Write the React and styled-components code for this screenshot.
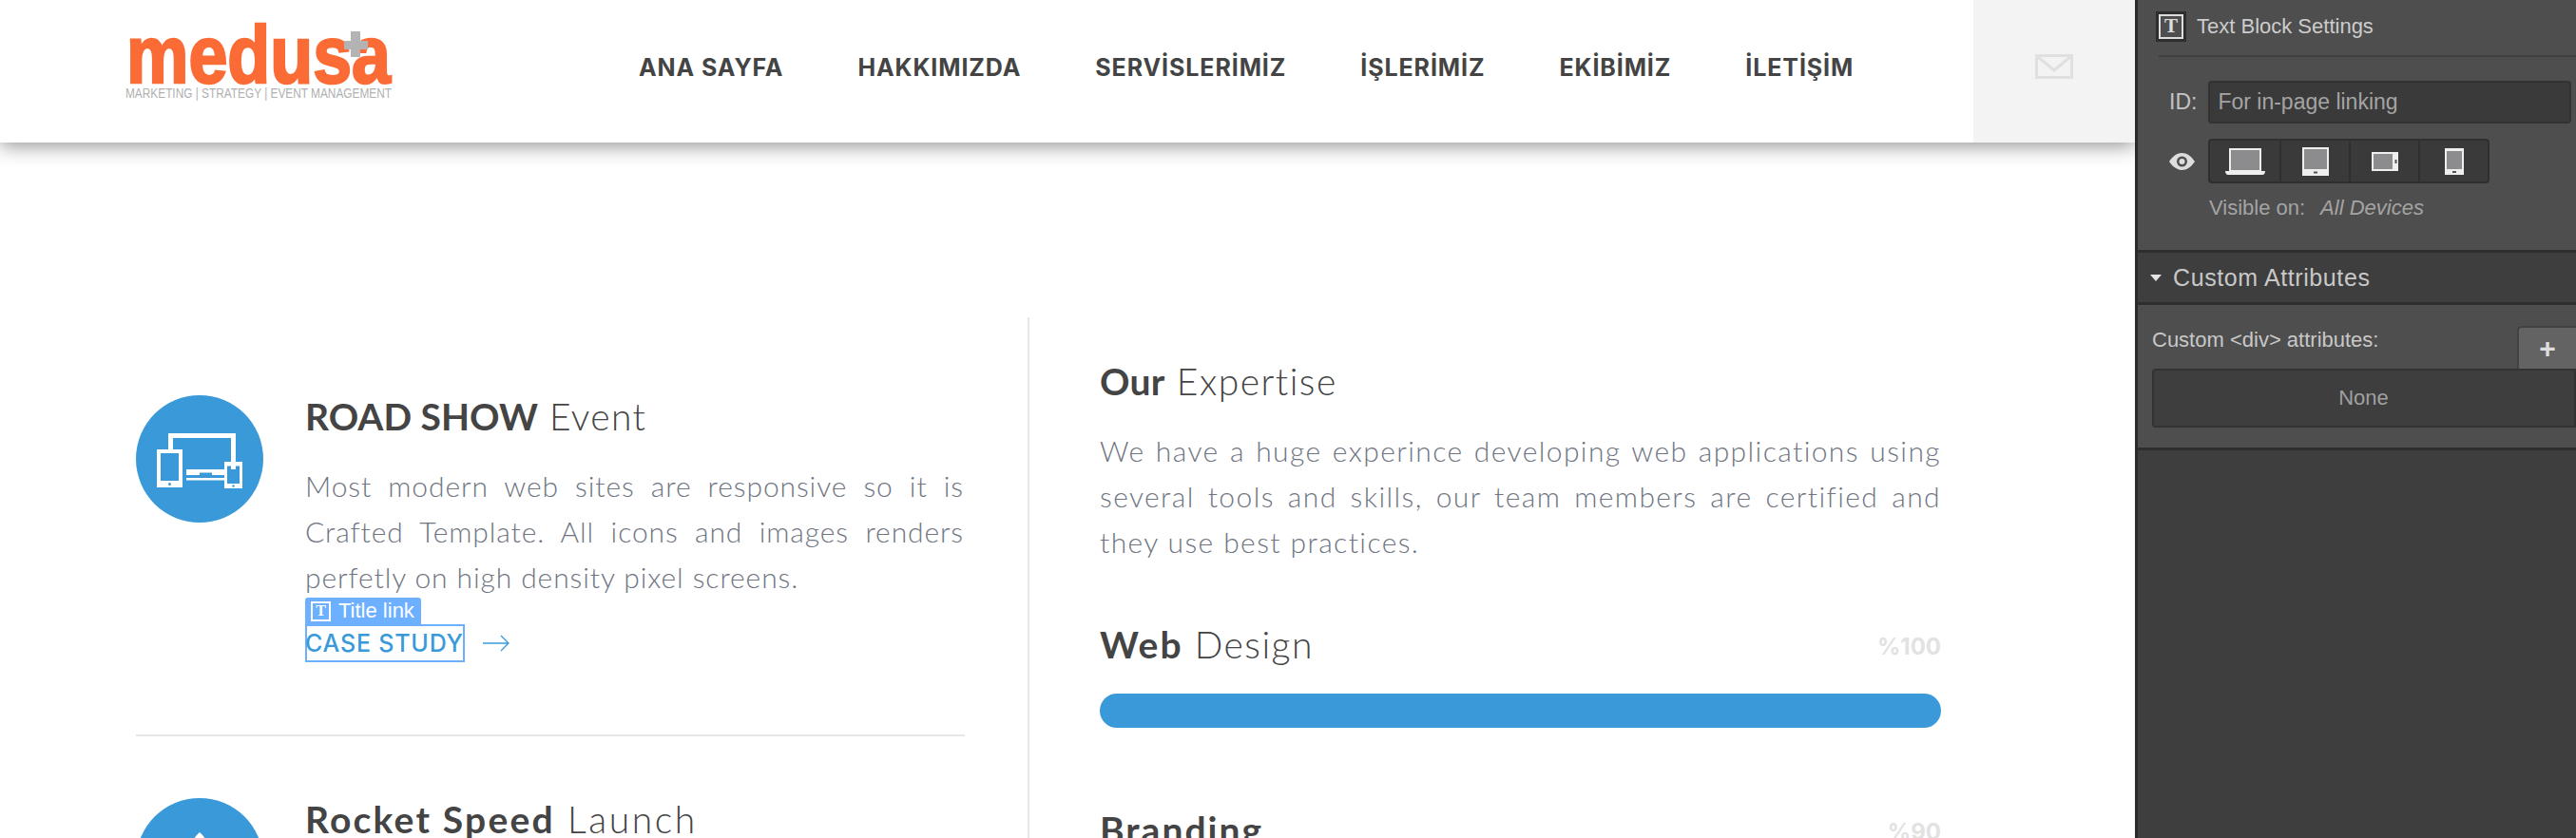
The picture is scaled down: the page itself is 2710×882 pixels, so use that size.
import React from 'react';
import styled, { createGlobalStyle } from 'styled-components';

const GlobalStyle = createGlobalStyle`
  html, body {
    margin: 0;
    padding: 0;
    height: 882px;
    overflow: hidden;
    background: #fff;
  }
  * { box-sizing: border-box; }
`;

const Page = styled.div`
  display: flex;
  width: 2710px;
  height: 882px;
  overflow: hidden;
  font-family: "Lato", "Liberation Sans", sans-serif;
`;

const Main = styled.main`
  width: 2246px;
  flex: none;
  height: 882px;
  overflow: hidden;
`;

const Header = styled.header`
  display: flex;
  height: 150px;
  background: #fff;
  box-shadow: 0 3px 20px rgba(0, 0, 0, 0.45);
  position: relative;
`;

const LogoWrap = styled.div`
  width: 280px;
  margin: 26px 0 0 132px;
  flex: none;
  svg { display: block; overflow: visible; }
`;

const Nav = styled.nav`
  display: flex;
  gap: 78px;
  margin-left: 260px;
  padding-top: 53px;
`;

const NavLink = styled.a`
  font-family: "Inter", "Liberation Sans", sans-serif;
  font-size: 25px;
  line-height: 36px;
  font-weight: 700;
  color: #444;
  letter-spacing: 0.9px;
  white-space: nowrap;
`;

const MailBox = styled.div`
  margin-left: auto;
  width: 170px;
  background: #f3f3f3;
  display: flex;
  justify-content: center;
  padding-top: 57px;
`;

const Columns = styled.div`
  display: flex;
  padding: 184px 0 0 143px;
`;

const LeftColumn = styled.section`
  width: 872px;
  padding-top: 82px;
  flex: none;
`;

const RightColumn = styled.section`
  margin-left: 66px;
  height: 548px;
  width: 961px;
  border-left: 2px solid #e6e6e6;
  padding: 16px 0 0 74px;
`;

const Feature = styled.article`
  display: flex;
  gap: 44px;
`;

const Circle = styled.div`
  width: 134px;
  height: 134px;
  border-radius: 50%;
  background: #3a9ad9;
  flex: none;
`;

const FeatureBody = styled.div`
  width: 693px;
`;

const Title = styled.h3`
  margin: ${p => p.$top || 0}px 0 0;
  font-size: 39px;
  line-height: 48px;
  font-weight: 300;
  color: #444;
  letter-spacing: ${p => p.$light || 0}px;
  white-space: nowrap;
  b {
    font-weight: 700;
    letter-spacing: ${p => p.$bold || 0}px;
  }
`;

const Text = styled.p`
  margin: ${p => p.$top || 0}px 0 0;
  width: ${p => p.$width || 'auto'};
  font-size: 30px;
  line-height: 48px;
  font-weight: 300;
  color: #6f7582;
  text-align: justify;
  letter-spacing: ${p => p.$ls || 0.9}px;
`;

const LinkRow = styled.div`
  display: flex;
  align-items: center;
  gap: 19px;
`;

const TitleTag = styled.div`
  display: flex;
  align-items: center;
  gap: 8px;
  width: 122px;
  height: 28px;
  margin-top: -2px;
  padding-left: 6px;
  background: #6cb0ff;
  border-radius: 3px 3px 0 0;
  color: #fff;
  font-family: "Liberation Sans", sans-serif;
  font-size: 22px;
  white-space: nowrap;
`;

const TIcon = styled.span`
  width: ${p => p.$size}px;
  height: ${p => p.$size}px;
  border: 2px solid ${p => p.$color};
  outline: ${p => (p.$dark ? '3px solid #2e2e2e' : 'none')};
  color: ${p => p.$color};
  display: flex;
  align-items: center;
  justify-content: center;
  font-family: "Liberation Serif", serif;
  font-weight: 700;
  font-size: ${p => p.$size - 5}px;
  line-height: 1;
  flex: none;
`;

const CaseLink = styled.a`
  display: block;
  width: 168px;
  height: 40px;
  border: 2px solid #6cb0ff;
  font-family: "Inter", "Liberation Sans", sans-serif;
  font-size: 25px;
  font-weight: 500;
  line-height: 37px;
  letter-spacing: 0.8px;
  color: #3a9ad9;
  white-space: nowrap;
  text-indent: -2px;
`;

const Rule = styled.hr`
  border: 0;
  height: 2px;
  background: #e6e6e6;
  margin: 76px 0 65px;
`;

const SkillRow = styled.div`
  display: flex;
  justify-content: space-between;
  margin-top: ${p => p.$top}px;
  width: 885px;
`;

const Percent = styled.span`
  font-family: "Inter", "Liberation Sans", sans-serif;
  font-size: 24px;
  font-weight: 700;
  line-height: 53px;
  color: #e2e2e2;
`;

const Bar = styled.div`
  width: 885px;
  height: 36px;
  margin-top: 23px;
  border-radius: 18px;
  background: #3a9ad9;
`;

const Panel = styled.aside`
  width: 464px;
  flex: none;
  height: 882px;
  background: #3e3e3e;
  border-left: 3px solid #2b2b2b;
  color: #ccc;
  font-family: "Liberation Sans", sans-serif;
  overflow: hidden;
`;

const PanelTop = styled.div`
  height: 263px;
  background: #4e4e4e;
`;

const PanelHead = styled.div`
  display: flex;
  align-items: center;
  gap: 14px;
  height: 60px;
  margin-left: 22px;
  padding: 0 0 3px;
  border-bottom: 2px solid #404040;
  font-size: 22px;
`;

const IdRow = styled.div`
  display: flex;
  align-items: center;
  gap: 12px;
  margin: 25px 0 0 33px;
  font-size: 23px;
  color: #c4c4c4;
`;

const IdInput = styled.div`
  width: 382px;
  height: 45px;
  padding: 0 8px;
  background: #3a3a3a;
  border: 2px solid #323232;
  border-radius: 4px;
  color: #a4a4a4;
  line-height: 41px;
`;

const DeviceRow = styled.div`
  display: flex;
  align-items: center;
  gap: 14px;
  margin: 16px 0 0 33px;
`;

const DeviceGroup = styled.div`
  display: flex;
  height: 47px;
  background: #3a3a3a;
  border: 2px solid #2f2f2f;
  border-radius: 4px;
`;

const DeviceCell = styled.div`
  width: 73px;
  display: flex;
  align-items: center;
  justify-content: center;
  border-left: ${p => (p.$first ? '0' : '2px solid #2f2f2f')};
`;

const VisibleRow = styled.div`
  display: flex;
  gap: 16px;
  margin: 13px 0 0 75px;
  font-size: 22px;
  color: #a4a4a4;
  i { font-style: italic; }
`;

const SectionHead = styled.div`
  display: flex;
  align-items: center;
  gap: 12px;
  height: 58px;
  padding-left: 13px;
  background: #3e3e3e;
  border-top: 3px solid #2e2e2e;
  border-bottom: 3px solid #2e2e2e;
  font-size: 25px;
  color: #c8c8c8;
  letter-spacing: 0.6px;
`;

const Caret = styled.span`
  width: 0;
  height: 0;
  border-left: 6.5px solid transparent;
  border-right: 6.5px solid transparent;
  border-top: 7px solid #e4e4e4;
`;

const SectionBody = styled.div`
  height: 153px;
  background: #4e4e4e;
  border-bottom: 3px solid #2e2e2e;
  padding: 22px 0 0 15px;
`;

const AttrHead = styled.div`
  display: flex;
  justify-content: space-between;
  height: 45px;
  font-size: 22px;
  color: #c8c8c8;
`;

const AttrLabel = styled.span`
  line-height: 30px;
`;

const PlusButton = styled.button`
  width: 62px;
  height: 45px;
  background: #636363;
  border: 2px solid #424242;
  border-bottom: 0;
  border-right: 0;
  border-radius: 5px 0 0 0;
  color: #ddd;
  font-family: "Liberation Sans", sans-serif;
  font-size: 30px;
  font-weight: 700;
  padding: 0;
  line-height: 42px;
`;

const NoneBox = styled.div`
  height: 62px;
  background: #3e3e3e;
  border: 2px solid #333;
  border-radius: 4px 0 0 4px;
  font-size: 22px;
  color: #a0a0a0;
  text-align: center;
  line-height: 58px;
  padding-right: 1px;
`;

const Logo = () => (
  <svg width="280" height="80" viewBox="0 0 280 80">
    <text
      x="1"
      y="61"
      textLength="278"
      lengthAdjust="spacingAndGlyphs"
      fontFamily="Liberation Sans, sans-serif"
      fontWeight="700"
      fontSize="86"
      fill="#fb6b35"
      stroke="#fb6b35"
      strokeWidth="2.500"
    >
      medusa
    </text>
    <path d="M237 7h10v10h8v9h-8v8h-10v-8h-7v-9h7z" fill="#b3b3b3" />
    <text
      x="0"
      y="77"
      textLength="280"
      lengthAdjust="spacingAndGlyphs"
      fontFamily="Liberation Sans, sans-serif"
      fontSize="14"
      fill="#b0b0b0"
    >
      MARKETING | STRATEGY | EVENT MANAGEMENT
    </text>
  </svg>
);

const MailIcon = () => (
  <svg width="40" height="26" viewBox="0 0 40 26" fill="none" stroke="#e0e0e0" strokeWidth="3">
    <rect x="1.5" y="1.5" width="37" height="23" />
    <path d="M2 2l18 15L38 2" />
  </svg>
);

const DevicesIcon = () => (
  <svg width="134" height="134" viewBox="0 0 134 134" fill="#fff">
    <path d="M34 40h71v38h-5V45H39v12h-5z" />
    <path fillRule="evenodd" d="M22 57h27v40H22zM26 61v29h19V61z" />
    <circle cx="35.500" cy="93.500" r="1.500" fill="#3a9ad9" />
    <path d="M53 78h41v6H80v-2.500H67V84H53z" />
    <rect x="53" y="87" width="40" height="2.500" />
    <path fillRule="evenodd" d="M93 70h19v28H93zM96 74.500v18.500h13V74.500z" />
    <circle cx="102.500" cy="95.500" r="1.200" fill="#3a9ad9" />
  </svg>
);

const RocketIcon = () => (
  <svg width="134" height="134" viewBox="0 0 134 134" fill="#fff">
    <path d="M67 36c8 7 12 17 12 28v24H55V64c0-11 4-21 12-28z" />
  </svg>
);

const ArrowIcon = () => (
  <svg width="28" height="18" viewBox="0 0 28 18" fill="none" stroke="#3a9ad9" strokeWidth="1.300">
    <path d="M0 9h27M19 1l8 8-8 8" />
  </svg>
);

const EyeIcon = () => (
  <svg width="27" height="18" viewBox="0 0 27 18">
    <path fillRule="evenodd" fill="#ddd" d="M0 9C4 3 8.500 0 13.500 0S23 3 27 9c-4 6-8.500 9-13.500 9S4 15 0 9zm13.500 5.500a5.500 5.500 0 1 0 0-11 5.500 5.500 0 0 0 0 11z" />
    <circle cx="13.500" cy="9" r="3" fill="#ddd" />
  </svg>
);

const LaptopIcon = () => (
  <svg width="42" height="28" viewBox="0 0 42 28">
    <rect x="4" y="0" width="34" height="24" fill="#eee" />
    <rect x="6" y="2" width="30" height="21" fill="#8c8c8e" />
    <path d="M0 24h42c0 2-1 4-3 4H3c-2 0-3-2-3-4z" fill="#eee" />
  </svg>
);

const TabletIcon = () => (
  <svg width="28" height="30" viewBox="0 0 28 30">
    <rect width="28" height="30" fill="#eee" />
    <rect x="2" y="2" width="24" height="21" fill="#8c8c8e" />
    <rect x="12" y="25.500" width="4" height="2" fill="#555" />
  </svg>
);

const LandscapeIcon = () => (
  <svg width="28" height="20" viewBox="0 0 28 20">
    <rect width="28" height="20" fill="#eee" />
    <rect x="2" y="2" width="20" height="16" fill="#8c8c8e" />
    <rect x="24.500" y="8" width="2" height="4" fill="#555" />
  </svg>
);

const PhoneIcon = () => (
  <svg width="20" height="28" viewBox="0 0 20 28">
    <rect width="20" height="28" fill="#eee" />
    <rect x="2" y="3" width="16" height="19" fill="#8c8c8e" />
    <rect x="8" y="24" width="4" height="2" fill="#555" />
  </svg>
);

const navItems = ['ANA SAYFA', 'HAKKIMIZDA', 'SERVİSLERİMİZ', 'İŞLERİMİZ', 'EKİBİMİZ', 'İLETİŞİM'];

export default function App() {
  return (
    <Page>
      <GlobalStyle />
      <Main>
        <Header>
          <LogoWrap><Logo /></LogoWrap>
          <Nav>
            {navItems.map(label => (
              <NavLink key={label}>{label}</NavLink>
            ))}
          </Nav>
          <MailBox><div><MailIcon /></div></MailBox>
        </Header>
        <Columns>
          <LeftColumn>
            <Feature>
              <Circle><DevicesIcon /></Circle>
              <FeatureBody>
                <Title $top={-2} $light={1.4}><b>ROAD SHOW</b> Event</Title>
                <Text $top={25}>
                  Most modern web sites are responsive so it is Crafted Template. All icons and images renders perfetly on high density pixel screens.
                </Text>
                <TitleTag><TIcon $size={21} $color="#fff">T</TIcon>Title link</TitleTag>
                <LinkRow>
                  <CaseLink>CASE STUDY</CaseLink>
                  <ArrowIcon />
                </LinkRow>
              </FeatureBody>
            </Feature>
            <Rule />
            <Feature>
              <Circle><RocketIcon /></Circle>
              <FeatureBody>
                <Title $top={-2} $light={2.6} $bold={2.2}><b>Rocket Speed</b> Launch</Title>
              </FeatureBody>
            </Feature>
          </LeftColumn>
          <RightColumn>
            <Title $top={27} $light={1.5} $bold={0.3}><b>Our</b> Expertise</Title>
            <Text $top={25} $width="885px" $ls={1.4}>
              We have a huge experince developing web applications using several tools and skills, our team members are certified and they use best practices.
            </Text>
            <SkillRow $top={60}>
              <Title $light={1.5} $bold={2}><b>Web</b> Design</Title>
              <Percent>%100</Percent>
            </SkillRow>
            <Bar />
            <SkillRow $top={83}>
              <Title $bold={2}><b>Branding</b></Title>
              <Percent>%90</Percent>
            </SkillRow>
          </RightColumn>
        </Columns>
      </Main>
      <Panel>
        <PanelTop>
          <PanelHead>
            <TIcon $size={26} $color="#ddd" $dark>T</TIcon>
            Text Block Settings
          </PanelHead>
          <IdRow>
            ID:
            <IdInput>For in-page linking</IdInput>
          </IdRow>
          <DeviceRow>
            <EyeIcon />
            <DeviceGroup>
              <DeviceCell $first><LaptopIcon /></DeviceCell>
              <DeviceCell><TabletIcon /></DeviceCell>
              <DeviceCell><LandscapeIcon /></DeviceCell>
              <DeviceCell><PhoneIcon /></DeviceCell>
            </DeviceGroup>
          </DeviceRow>
          <VisibleRow>
            <span>Visible on:</span>
            <i>All Devices</i>
          </VisibleRow>
        </PanelTop>
        <SectionHead><Caret />Custom Attributes</SectionHead>
        <SectionBody>
          <AttrHead>
            <AttrLabel>Custom &lt;div&gt; attributes:</AttrLabel>
            <PlusButton>+</PlusButton>
          </AttrHead>
          <NoneBox>None</NoneBox>
        </SectionBody>
      </Panel>
    </Page>
  );
}
